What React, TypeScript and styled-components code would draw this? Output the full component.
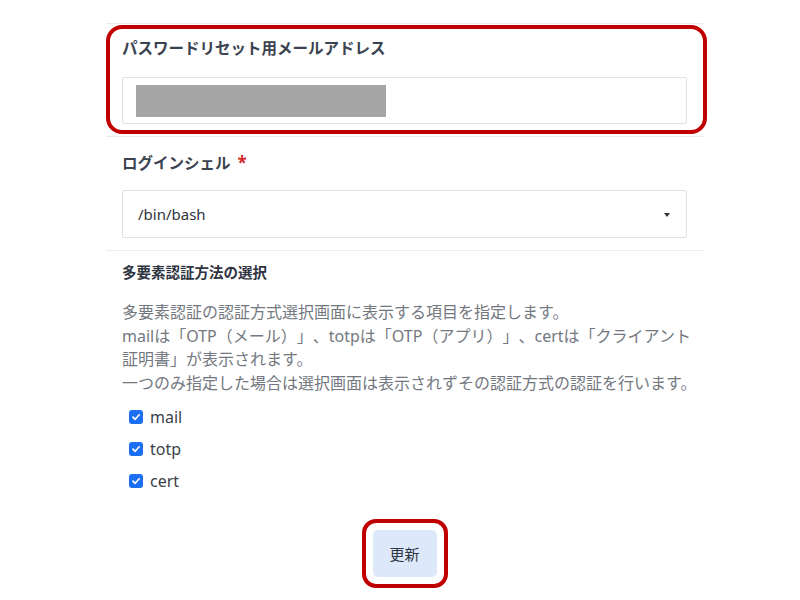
import React from "react";
import styled, { createGlobalStyle } from "styled-components";

const GlobalStyle = createGlobalStyle`
    html, body {
        margin: 0;
        padding: 0;
        background: #ffffff;
    }
    body {
        font-family: "Noto Sans", "Noto Sans CJK JP", sans-serif;
        color: #3b4250;
        text-spacing-trim: space-all;
    }
`;

const methods = ["mail", "totp", "cert"];

export default function App() {
    return (
        <>
            <GlobalStyle />
            <Page>
                <Form>
                    <Highlighted>
                        <Group>
                            <Label>パスワードリセット用メールアドレス</Label>
                            <Input>
                                <Redacted />
                            </Input>
                        </Group>
                    </Highlighted>
                    <Group>
                        <Label $gapTop={2}>
                            ログインシェル <Required>*</Required>
                        </Label>
                        <Select>
                            <span>/bin/bash</span>
                            <Caret />
                        </Select>
                    </Group>
                    <Group $last>
                        <Title>多要素認証方法の選択</Title>
                        <Help>
                            多要素認証の認証方式選択画面に表示する項目を指定します。
                            <br />
                            mailは「OTP（メール）」、totpは「OTP（アプリ）」、certは「クライアント証明書」が表示されます。
                            <br />
                            一つのみ指定した場合は選択画面は表示されずその認証方式の認証を行います。
                        </Help>
                        <Checks>
                            {methods.map((m) => (
                                <Check key={m}>
                                    <Box>
                                        <svg width="10" height="10" viewBox="0 0 10 10">
                                            <path d="M2 5.2 L4.2 7.3 L8.2 2.8" fill="none" stroke="#fff" strokeWidth="1.7" strokeLinecap="round" strokeLinejoin="round" />
                                        </svg>
                                    </Box>
                                    {m}
                                </Check>
                            ))}
                        </Checks>
                    </Group>
                    <Actions>
                        <ButtonRing>
                            <Button>更新</Button>
                        </ButtonRing>
                    </Actions>
                </Form>
            </Page>
        </>
    );
}

const Page = styled.div`
    width: 800px;
    height: 600px;
    overflow: hidden;
    padding-top: 23px;
    box-sizing: border-box;
`;

const Form = styled.div`
    width: 597px;
    margin-left: 106px;
    border-top: 1px solid #ececef;
`;

const Highlighted = styled.div`
    position: relative;

    &::after {
        content: "";
        position: absolute;
        left: 0;
        right: -4px;
        top: 1px;
        bottom: 3px;
        border: 4.5px solid #c00000;
        border-radius: 16px;
        pointer-events: none;
    }
`;

const Group = styled.div<{ $last?: boolean }>`
    padding: 12px 16px ${(p) => (p.$last ? "0" : "12px")};
    border-bottom: ${(p) => (p.$last ? "none" : "1px solid #ececef")};
`;

const Label = styled.div<{ $gapTop?: number }>`
    font-size: 15.5px;
    font-weight: 700;
    line-height: 22px;
    color: #3b4250;
    margin-bottom: ${(p) => 18 - (p.$gapTop ?? 0)}px;
    padding-top: ${(p) => 1 + (p.$gapTop ?? 0)}px;
`;

const Required = styled.span`
    color: #d0272b;
    font-size: 17px;
    margin-left: 3px;
`;

const Input = styled.div`
    height: 47px;
    border: 1px solid #dfe1e5;
    border-radius: 2px;
    box-sizing: border-box;
    display: flex;
    align-items: center;
    padding-left: 13px;
`;

const Redacted = styled.div`
    width: 250px;
    height: 32px;
    background: #a6a6a6;
`;

const Select = styled.div`
    height: 48px;
    border: 1px solid #dfe1e5;
    border-radius: 2px;
    box-sizing: border-box;
    display: flex;
    align-items: center;
    justify-content: space-between;
    padding: 0 16px 0 15px;
    font-size: 15px;
    color: #2f3540;
`;

const Caret = styled.span`
    width: 0;
    height: 0;
    border-left: 3.5px solid transparent;
    border-right: 3.5px solid transparent;
    border-top: 4px solid #333;
    margin-top: 2px;
`;

const Title = styled.div`
    font-size: 14.5px;
    font-weight: 700;
    line-height: 22px;
    color: #2e3440;
    margin-top: -2px;
    margin-bottom: 18px;
`;

const Help = styled.div`
    font-size: 16px;
    line-height: 23.5px;
    color: #737880;
    margin-bottom: 10px;
    margin-right: -12px;
`;

const Checks = styled.div`
    display: flex;
    flex-direction: column;
    gap: 8px;
    padding-left: 7px;
`;

const Check = styled.label`
    display: flex;
    align-items: center;
    gap: 7px;
    font-size: 16px;
    line-height: 24px;
    color: #3a3f48;
`;

const Box = styled.span`
    width: 14px;
    height: 14px;
    border-radius: 3px;
    background: #1a6ff2;
    display: flex;
    align-items: center;
    justify-content: center;
`;

const Actions = styled.div`
    display: flex;
    justify-content: center;
    margin-top: 26px;
`;

const ButtonRing = styled.div`
    border: 4.5px solid #c00000;
    border-radius: 14px;
    padding: 7px;
`;

const Button = styled.button`
    width: 64px;
    height: 47px;
    border: none;
    border-radius: 5px;
    background: #dde9fb;
    font-family: "Noto Sans CJK JP", sans-serif;
    font-size: 15px;
    color: #2f3540;
`;
